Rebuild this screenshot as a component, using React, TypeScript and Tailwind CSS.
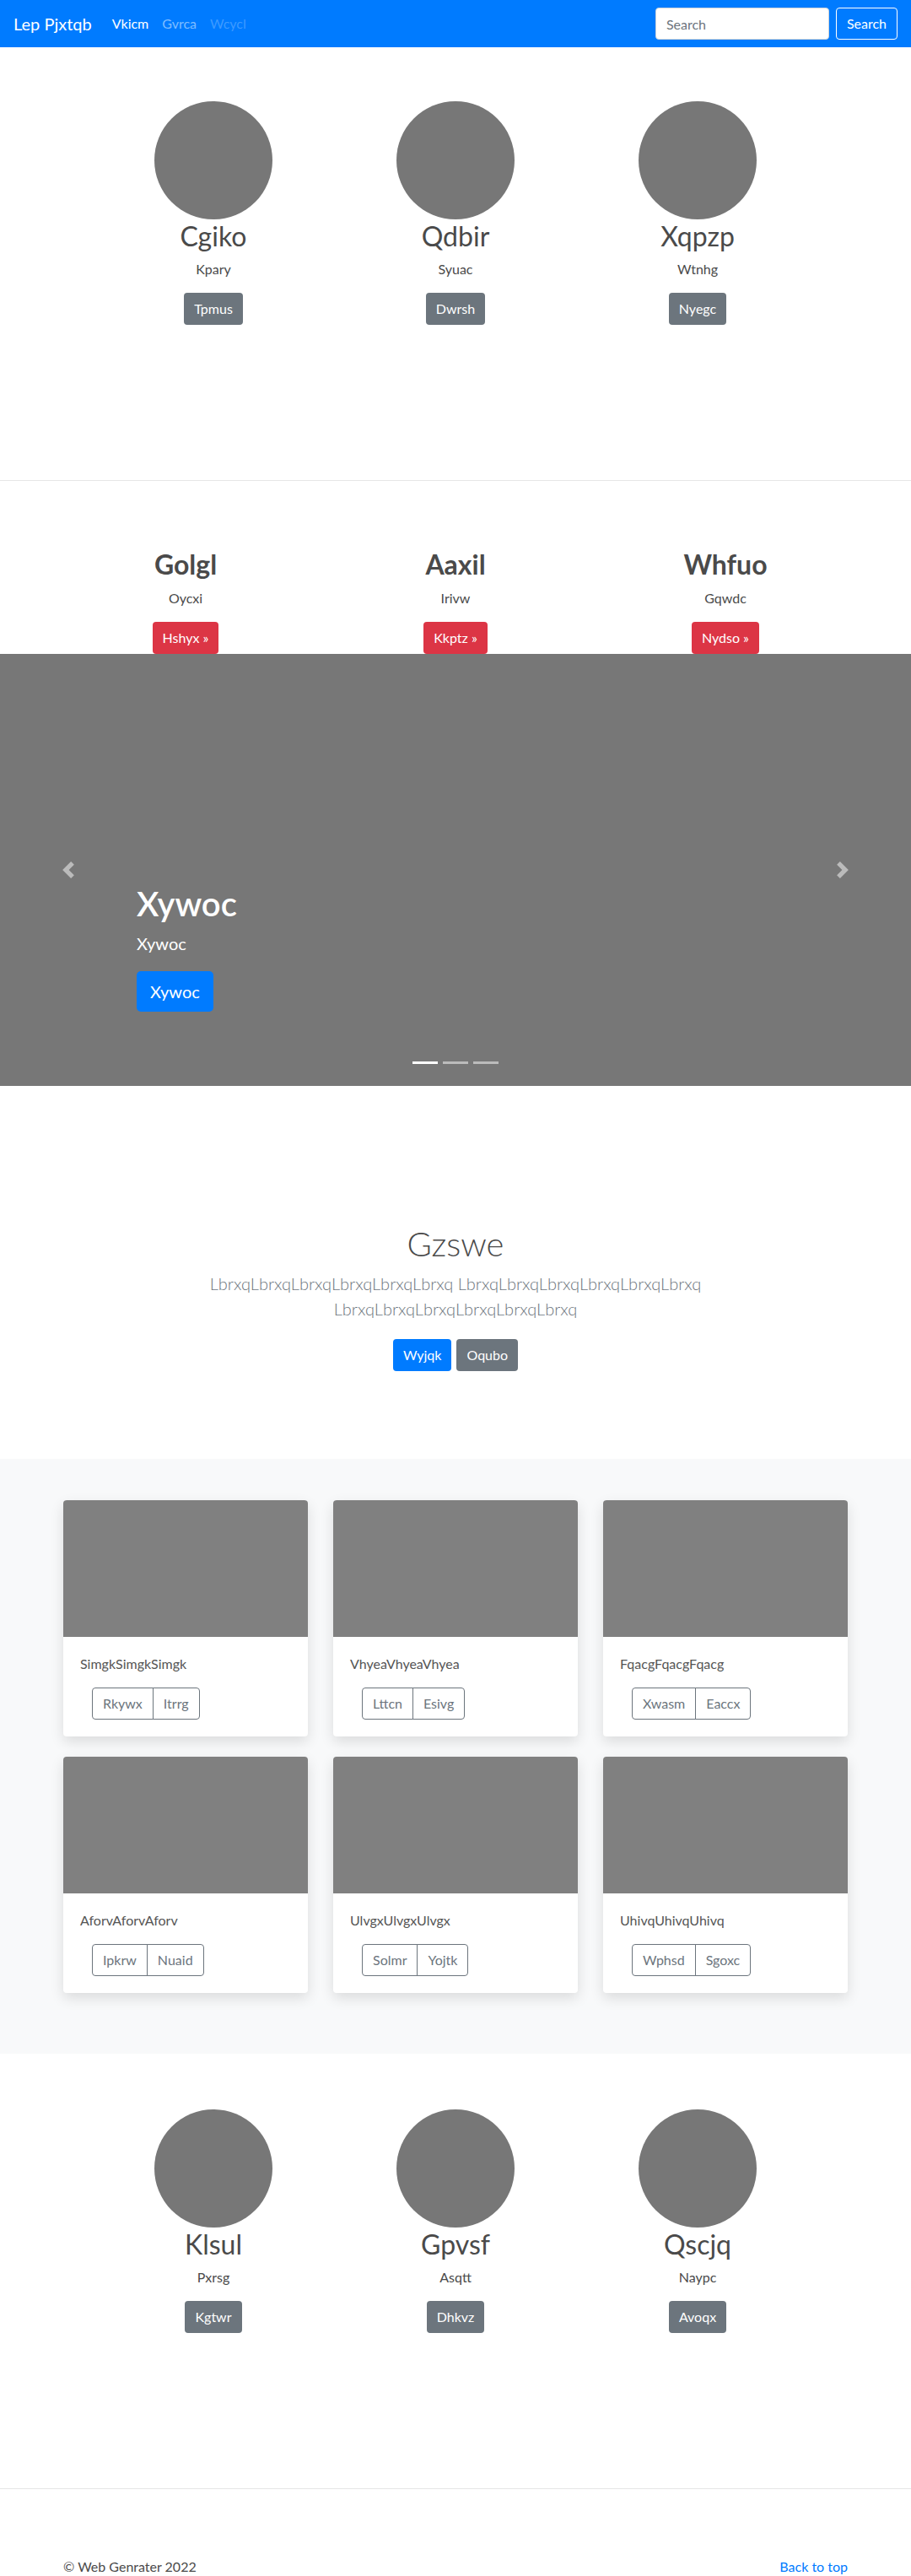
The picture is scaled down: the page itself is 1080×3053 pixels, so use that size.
import React from 'react'

const people = [
  { name: 'Cgiko', sub: 'Kpary', btn: 'Tpmus' },
  { name: 'Qdbir', sub: 'Syuac', btn: 'Dwrsh' },
  { name: 'Xqpzp', sub: 'Wtnhg', btn: 'Nyegc' },
]

const people2 = [
  { name: 'Klsul', sub: 'Pxrsg', btn: 'Kgtwr' },
  { name: 'Gpvsf', sub: 'Asqtt', btn: 'Dhkvz' },
  { name: 'Qscjq', sub: 'Naypc', btn: 'Avoqx' },
]

const features = [
  { name: 'Golgl', sub: 'Oycxi', btn: 'Hshyx' },
  { name: 'Aaxil', sub: 'Irivw', btn: 'Kkptz' },
  { name: 'Whfuo', sub: 'Gqwdc', btn: 'Nydso' },
]

const cards = [
  { title: 'SimgkSimgkSimgk', a: 'Rkywx', b: 'Itrrg' },
  { title: 'VhyeaVhyeaVhyea', a: 'Lttcn', b: 'Esivg' },
  { title: 'FqacgFqacgFqacg', a: 'Xwasm', b: 'Eaccx' },
  { title: 'AforvAforvAforv', a: 'Ipkrw', b: 'Nuaid' },
  { title: 'UlvgxUlvgxUlvgx', a: 'Solmr', b: 'Yojtk' },
  { title: 'UhivqUhivqUhivq', a: 'Wphsd', b: 'Sgoxc' },
]

function Navbar() {
  return (
    <nav className="flex h-[56px] items-center bg-[#007bff] px-4">
      <span className="mr-4 text-[20px] text-white">Lep Pjxtqb</span>
      <div className="flex text-base">
        <span className="px-2 text-white">Vkicm</span>
        <span className="px-2 text-white/50">Gvrca</span>
        <span className="px-2 text-white/25">Wcycl</span>
      </div>
      <div className="ml-auto flex items-center">
        <input
          placeholder="Search"
          className="mr-2 h-[38px] w-[206px] rounded border border-[#ced4da] bg-white px-3 text-base text-[#495057] placeholder:text-[#6c757d]"
        />
        <button className="h-[38px] rounded border border-white px-3 text-base text-white">Search</button>
      </div>
    </nav>
  )
}

function Marketing({ items, top }: { items: typeof people; top: string }) {
  return (
    <section className={`${top} pb-[184px]`}>
      <div className="mx-auto grid w-[861px] grid-cols-3">
        {items.map((p) => (
          <div key={p.name} className="flex flex-col items-center">
            <div className="h-[140px] w-[140px] rounded-full bg-[#777]" />
            <h2 className="mt-px mb-2 text-[32px] leading-[1.2] font-normal">{p.name}</h2>
            <p className="mb-4 text-base leading-6">{p.sub}</p>
            <button className="h-[38px] rounded bg-[#6c757d] px-3 text-base text-white">{p.btn}</button>
          </div>
        ))}
      </div>
    </section>
  )
}

function Chevron({ left }: { left?: boolean }) {
  return (
    <svg viewBox="0 0 8 8" className="h-5 w-5" fill="#fff">
      {left ? (
        <path d="M5.25 0l-4 4 4 4 1.5-1.5L4.25 4l2.5-2.5L5.25 0z" />
      ) : (
        <path d="M2.75 0l-1.5 1.5L3.75 4l-2.5 2.5L2.75 8l4-4-4-4z" />
      )}
    </svg>
  )
}

export default function App() {
  return (
    <div className="bg-white font-['Lato','Open_Sans',sans-serif] text-[#4a4a4a]">
      <Navbar />

      <Marketing items={people} top="pt-16" />
      <hr className="border-t border-[#e6e6e6]" />

      {/* features */}
      <section className="pt-[80px]">
        <div className="mx-auto grid w-[960px] grid-cols-3">
          {features.map((f) => (
            <div key={f.name} className="flex flex-col items-center">
              <h2 className="mb-2 text-[32px] leading-[1.2] font-bold">{f.name}</h2>
              <p className="mb-4 text-base leading-6">{f.sub}</p>
              <button className="h-[38px] rounded bg-[#dc3545] px-3 text-base text-white">{f.btn} »</button>
            </div>
          ))}
        </div>
      </section>

      {/* carousel */}
      <section className="relative flex h-[512px] flex-col justify-end bg-[#777] pb-[88px] pl-[162px] text-white">
        <div className="absolute top-0 bottom-0 left-0 flex w-[162px] items-center justify-center opacity-50">
          <Chevron left />
        </div>
        <div className="absolute top-0 right-0 bottom-0 flex w-[162px] items-center justify-center opacity-50">
          <Chevron />
        </div>
        <h1 className="mb-2 text-[40px] leading-[1.2] font-semibold">Xywoc</h1>
        <p className="text-[20px] leading-[30px]">Xywoc</p>
        <div className="mt-[18px]">
          <button className="h-[48px] rounded-[5px] bg-[#007bff] px-4 text-[20px] text-white">Xywoc</button>
        </div>
        <div className="absolute bottom-[26px] left-0 right-0 flex justify-center gap-[6px]">
          <span className="h-[3px] w-[30px] bg-white" />
          <span className="h-[3px] w-[30px] bg-white/50" />
          <span className="h-[3px] w-[30px] bg-white/50" />
        </div>
      </section>

      {/* jumbotron */}
      <section className="pt-[163px] pb-[104px] text-center">
        <h1 className="mb-2 text-[40px] leading-[1.2] font-light">Gzswe</h1>
        <p className="mx-auto w-[610px] text-[20px] leading-[30px] font-light text-[#6c757d]">
          LbrxqLbrxqLbrxqLbrxqLbrxqLbrxq LbrxqLbrxqLbrxqLbrxqLbrxqLbrxq LbrxqLbrxqLbrxqLbrxqLbrxqLbrxq
        </p>
        <div className="mt-[21px] flex justify-center gap-[6px]">
          <button className="h-[38px] rounded bg-[#007bff] px-3 text-base text-white">Wyjqk</button>
          <button className="h-[38px] rounded bg-[#6c757d] px-3 text-base text-white">Oqubo</button>
        </div>
      </section>

      {/* album */}
      <section className="bg-[#f8f9fa] pt-[49px] pb-[72px]">
        <div className="mx-auto grid w-[930px] grid-cols-3 gap-x-[30px] gap-y-6">
          {cards.map((c) => (
            <div key={c.title} className="overflow-hidden rounded bg-white shadow-[0_6px_16px_rgba(0,0,0,0.12)]">
              <div className="h-[162px] bg-[#808080]" />
              <div className="p-5">
                <p className="mb-4 text-base leading-6 text-[#555]">{c.title}</p>
                <div className="ml-[14px] inline-flex text-base text-[#6c757d]">
                  <button className="h-[38px] rounded-l border border-[#6c757d] px-3">{c.a}</button>
                  <button className="-ml-px h-[38px] rounded-r border border-[#6c757d] px-3">{c.b}</button>
                </div>
              </div>
            </div>
          ))}
        </div>
      </section>

      <Marketing items={people2} top="pt-[66px]" />
      <hr className="border-t border-[#e6e6e6]" />

      <footer className="mx-auto flex w-[930px] justify-between pt-[80px] text-base leading-6">
        <p>© Web Genrater 2022</p>
        <a className="text-[#007bff]">Back to top</a>
      </footer>
    </div>
  )
}
